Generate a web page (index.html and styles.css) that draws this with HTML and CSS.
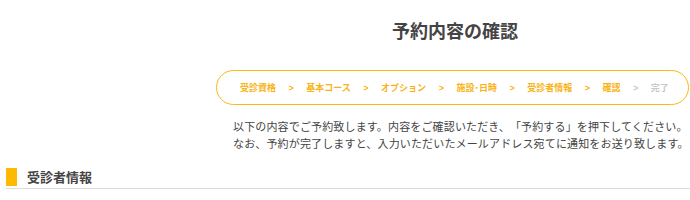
FILE: index.html
```html
<!DOCTYPE html>
<html lang="ja">
<head>
<meta charset="utf-8">
<title>予約内容の確認</title>
<link rel="stylesheet" href="styles.css">
</head>
<body>
<div class="main">
  <h1 class="title">予約内容の確認</h1>
  <ol class="steps">
    <li class="step">受診資格</li>
    <li class="sep">&gt;</li>
    <li class="step">基本コース</li>
    <li class="sep">&gt;</li>
    <li class="step">オプション</li>
    <li class="sep">&gt;</li>
    <li class="step">施設･日時</li>
    <li class="sep">&gt;</li>
    <li class="step">受診者情報</li>
    <li class="sep">&gt;</li>
    <li class="step">確認</li>
    <li class="sep off">&gt;</li>
    <li class="step off">完了</li>
  </ol>
  <p class="lead">以下の内容でご予約致します。内容をご確認いただき、「予約する」を押下してください。<br>なお、予約が完了しますと、入力いただいたメールアドレス宛てに通知をお送り致します。</p>
</div>
<h2 class="section"><span class="bar"></span><span class="section-text">受診者情報</span></h2>
</body>
</html>
```
FILE: styles.css
```css
html, body {
  margin: 0;
  padding: 0;
  background: #fff;
}
body {
  font-family: "Noto Sans CJK JP", "Noto Sans", sans-serif;
  color: #444;
  width: 690px;
  overflow: hidden;
  text-spacing-trim: space-all;
}
.main {
  margin-left: 216px;
  width: 474px;
}
.title {
  margin: 18px 0 0 0;
  padding-left: 4px;
  font-size: 18px;
  line-height: 24px;
  font-weight: bold;
  text-align: center;
  color: #444;
}
.steps {
  list-style: none;
  margin: 28px 0 0 0;
  box-sizing: border-box;
  width: 473px;
  height: 35px;
  padding: 0 0 0 23px;
  border: 1px solid #fcb813;
  border-radius: 18px;
  display: flex;
  align-items: center;
}
.step {
  font-size: 9px;
  font-weight: bold;
  color: #f8b316;
  line-height: 12px;
  white-space: nowrap;
}
.sep {
  font-family: "Liberation Sans", sans-serif;
  font-size: 9px;
  font-weight: bold;
  color: #f8b316;
  margin: 0 12.5px;
  line-height: 12px;
}
.off {
  color: #c8c8c8;
}
.lead {
  margin: 13px 0 0 17px;
  font-size: 11px;
  letter-spacing: 0.15px;
  line-height: 17px;
  color: #444;
  white-space: nowrap;
}
.section {
  margin: 16px 0 0 6px;
  padding-bottom: 2px;
  border-bottom: 1px solid #dcdcdc;
  display: flex;
  align-items: center;
  font-size: 13px;
  font-weight: bold;
  line-height: 18px;
  color: #444;
}
.bar {
  width: 11px;
  height: 18px;
  background: #ffb900;
  margin-right: 10px;
}
```
